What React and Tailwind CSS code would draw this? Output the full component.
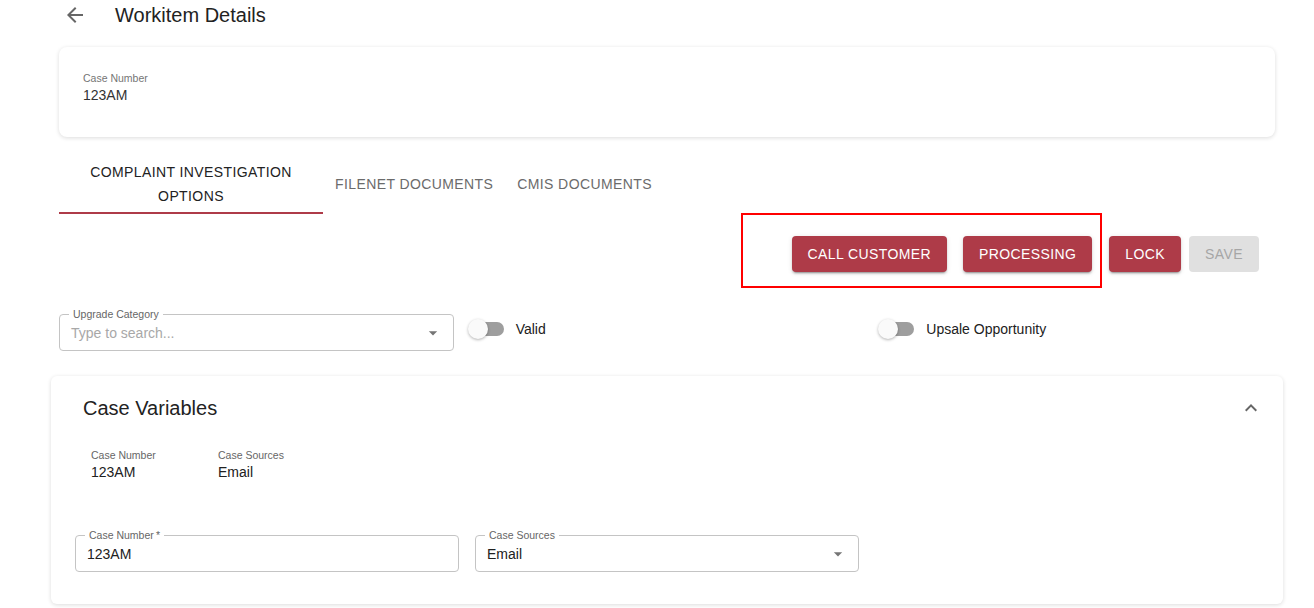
import React from "react";

function ArrowDrop() {
  return (
    <svg width="20" height="20" viewBox="0 0 24 24" className="shrink-0">
      <path d="M7 10l5 5 5-5z" fill="#757575" />
    </svg>
  );
}

function Field({ label, value, placeholder, select }) {
  return (
    <div className="relative h-[37px] rounded border border-[#c4c4c4] flex items-center pl-[11px] pr-[10px]">
      <span className="absolute -top-[7px] left-[9px] px-[4px] bg-white text-[10.5px] leading-[12px] text-[#666]">
        {label}
      </span>
      <span
        className={
          "flex-1 text-sm leading-[20px] " +
          (value ? "text-[#212121]" : "text-[#a8a8a8]")
        }
      >
        {value || placeholder}
      </span>
      {select && <ArrowDrop />}
    </div>
  );
}

function Switch({ label }) {
  return (
    <div className="self-start flex items-center mt-[5px] -ml-[2px]">
      <div className="relative w-[36px] h-[20px]">
        <div className="absolute left-[4px] right-0 top-[3px] h-[14px] rounded-full bg-[#9e9e9e]" />
        <div className="absolute left-0 top-0 w-5 h-5 rounded-full bg-[#fafafa] shadow-[0_1px_3px_rgba(0,0,0,0.3)]" />
      </div>
      <span className="ml-3 text-sm leading-[20px] text-[#212121]">{label}</span>
    </div>
  );
}

function Btn({ children, disabled, className = "" }) {
  return (
    <button
      className={
        "h-[36px] px-4 rounded text-sm tracking-[0.4px] " +
        (disabled
          ? "bg-[#e0e0e0] text-[#a6a6a6] "
          : "bg-[#ae3b48] text-white shadow-[0_3px_1px_-2px_rgba(0,0,0,0.2),0_2px_2px_0_rgba(0,0,0,0.14),0_1px_5px_0_rgba(0,0,0,0.12)] ") +
        className
      }
    >
      {children}
    </button>
  );
}

export default function App() {
  return (
    <div className="min-h-[608px] bg-white pl-[59px] pr-[39px] font-['Liberation_Sans',Arial,sans-serif] text-[#212121]">
      {/* Header */}
      <div className="h-[30px] flex items-center">
        <svg width="24" height="24" viewBox="0 0 24 24" className="ml-[4px]">
          <path
            d="M20 11H7.83l5.59-5.59L12 4l-8 8 8 8 1.41-1.41L7.83 13H20v-2z"
            fill="#666"
          />
        </svg>
        <h1 className="ml-[28px] text-[20px] leading-[24px] text-[#222]">Workitem Details</h1>
      </div>

      {/* Card 1 */}
      <div className="mt-[17px] h-[90px] rounded-lg bg-white shadow-[0_1px_4px_rgba(0,0,0,0.14)] pt-6 px-6">
        <div className="text-[10.5px] leading-[14px] text-[#757575]">Case Number</div>
        <div className="text-sm leading-[20px] text-[#333]">123AM</div>
      </div>

      {/* Tabs */}
      <div className="mt-[11px] flex items-stretch text-sm tracking-[0.4px]">
        <div className="w-[264px] pt-3 pb-[4px] border-b-2 border-[#ae3b48] text-center leading-[24px] text-[#222]">
          COMPLAINT INVESTIGATION
          <br />
          OPTIONS
        </div>
        <div className="px-3 pt-3 pb-[6px] flex items-center text-[#6b6b6b]">FILENET DOCUMENTS</div>
        <div className="px-3 pt-3 pb-[6px] flex items-center text-[#6b6b6b]">CMIS DOCUMENTS</div>
      </div>

      {/* Buttons */}
      <div className="mt-[22px] flex items-center justify-end pr-4">
        <div className="relative flex items-center gap-4">
          <div className="absolute -left-[51px] -top-[23px] -right-[10px] -bottom-[16px] border-2 border-[#ff0000] pointer-events-none" />
          <Btn>CALL CUSTOMER</Btn>
          <Btn>PROCESSING</Btn>
        </div>
        <Btn className="ml-[17px]">LOCK</Btn>
        <Btn disabled className="ml-2">
          SAVE
        </Btn>
      </div>

      {/* Row of field + switches */}
      <div className="mt-[42px] grid grid-cols-3 gap-4">
        <Field label="Upgrade Category" placeholder="Type to search..." select />
        <Switch label="Valid" />
        <Switch label="Upsale Opportunity" />
      </div>

      {/* Case Variables card */}
      <div className="mt-[25px] -mx-2 rounded-md bg-white shadow-[0_1px_4px_rgba(0,0,0,0.14)]">
        <div className="h-[64px] flex items-center justify-between pl-8 pr-5">
          <h2 className="text-[20px] leading-[24px] text-[#222]">Case Variables</h2>
          <svg width="24" height="24" viewBox="0 0 24 24">
            <path d="M12 8l-6 6 1.41 1.41L12 10.83l4.59 4.58L18 14z" fill="#666" />
          </svg>
        </div>
        <div className="px-6 pt-[9px] pb-8">
          <div className="ml-4 flex">
            <div className="w-[127px]">
              <div className="text-[10.5px] leading-[13px] text-[#666]">Case Number</div>
              <div className="text-sm leading-[20px] text-[#212121]">123AM</div>
            </div>
            <div className="w-[127px]">
              <div className="text-[10.5px] leading-[13px] text-[#666]">Case Sources</div>
              <div className="text-sm leading-[20px] text-[#212121]">Email</div>
            </div>
          </div>
          <div className="mt-[53px] grid grid-cols-3 gap-4">
            <Field label={"Case Number\u2009*"} value="123AM" />
            <Field label="Case Sources" value="Email" select />
          </div>
        </div>
      </div>
    </div>
  );
}
